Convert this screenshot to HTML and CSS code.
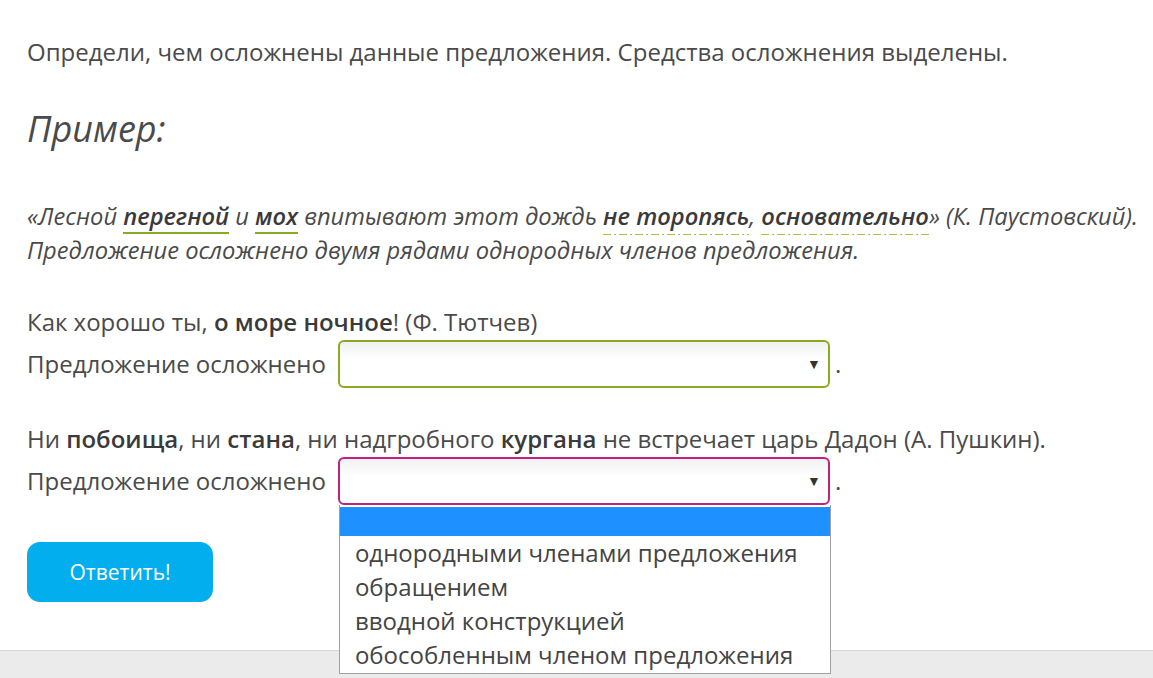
FILE: index.html
```html
<!DOCTYPE html>
<html lang="ru">
<head>
    <meta charset="UTF-8">
    <meta name="viewport" content="width=device-width, initial-scale=1.0">
    <title>Осложнённое предложение</title>
    <link rel="stylesheet" href="styles.css">
</head>
<body>
    <div class="exercise">
        <p class="task">Определи, чем осложнены данные предложения. Средства осложнения выделены.</p>

        <h2 class="example-title">Пример:</h2>

        <p class="example">«Лесной <b class="line-solid">перегной</b> и <b class="line-solid">мох</b> впитывают этот дождь <b class="line-dash">не торопясь</b>, <b class="line-dash">основательно</b>» (К. Паустовский).<br>
        Предложение осложнено двумя рядами однородных членов предложения.</p>

        <div class="question">
            <p>Как хорошо ты, <b>о море ночное</b>! (Ф. Тютчев)</p>
            <div class="answer">
                <span>Предложение осложнено</span>
                <div class="select select-green"><span class="arrow">▼</span></div>
                <span class="dot">.</span>
            </div>
        </div>

        <div class="question">
            <p>Ни <b>побоища</b>, ни <b>стана</b>, ни надгробного <b>кургана</b> не встречает царь Дадон (А. Пушкин).</p>
            <div class="answer">
                <span>Предложение осложнено</span>
                <div class="select select-pink">
                    <span class="arrow">▼</span>
                    <ul class="options">
                        <li class="selected">&nbsp;</li>
                        <li>однородными членами предложения</li>
                        <li>обращением</li>
                        <li>вводной конструкцией</li>
                        <li>обособленным членом предложения</li>
                    </ul>
                </div>
                <span class="dot">.</span>
            </div>
        </div>

        <button class="submit">Ответить!</button>
    </div>
    <div class="footer"></div>
</body>
</html>
```

FILE: styles.css
```css
body {
    margin: 0;
    font-family: 'Open Sans', sans-serif;
    font-size: 24px;
    line-height: 34px;
    color: #4a4a4a;
    background: #fff;
}

b {
    font-weight: 600;
    color: #3a3a3a;
}

.exercise {
    padding: 35px 0 0 27px;
    height: 615px;
}

.task {
    margin: 0;
}

.example-title {
    margin: 38px 0 0;
    font-size: 36px;
    line-height: 44px;
    font-style: italic;
    font-weight: 400;
}

.example {
    margin: 48px 0 0;
    font-size: 23.7px;
    font-style: italic;
    white-space: nowrap;
}

.line-solid {
    border-bottom: 2px solid #8aaa22;
}

.line-dash {
    padding-bottom: 3px;
    background-image: repeating-linear-gradient(90deg, #b5c02e 0 8px, transparent 8px 11px, #a8ad7a 11px 13px, transparent 13px 16px);
    background-size: 100% 1px;
    background-position: 0 100%;
    background-repeat: no-repeat;
}

.question {
    margin-top: 38px;
}

.question + .question {
    margin-top: 34px;
}

.question p {
    margin: 0;
}

.answer {
    display: flex;
    align-items: center;
    margin-top: 1px;
}

.select {
    position: relative;
    width: 488px;
    height: 44px;
    margin-left: 12px;
    border: 2px solid #8aaa22;
    border-radius: 6px;
    background: linear-gradient(#f1f1f1, #fff 40%);
}

.select-pink {
    border-color: #c2217f;
}

.arrow {
    position: absolute;
    right: 7px;
    top: 5px;
    font-size: 14px;
    color: #333;
}

.dot {
    margin-left: 5px;
}

.options {
    position: absolute;
    left: -1px;
    top: 46px;
    width: 490px;
    margin: 0;
    padding: 2px 0 1px;
    list-style: none;
    background: #fff;
    border: 1px solid #a0a0a0;
    border-top: none;
    z-index: 5;
    color: #444;
}

.options li {
    padding-left: 15px;
}

.options .selected {
    background: #1e90ff;
    height: 29px;
}

.submit {
    margin-top: 37px;
    width: 186px;
    height: 60px;
    border: none;
    border-radius: 13px;
    background: #03aeef;
    color: #fff;
    font-family: 'Open Sans', sans-serif;
    font-size: 21px;
    cursor: pointer;
}

.footer {
    height: 28px;
    background: #ebebeb;
    border-top: 1px solid #d4d4d4;
}
```
